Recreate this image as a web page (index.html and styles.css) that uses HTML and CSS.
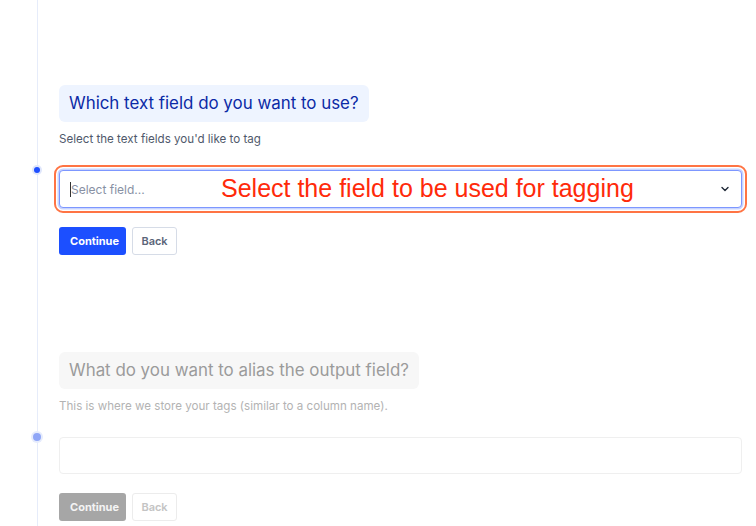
FILE: index.html
```html
<!DOCTYPE html>
<html lang="en">
<head>
<meta charset="utf-8">
<title>Tagging setup</title>
<link rel="stylesheet" href="styles.css">
</head>
<body>
<div class="page">
  <div class="timeline">
    <section class="step step-active">
      <div class="step-title">Which text field do you want to use?</div>
      <p class="step-desc">Select the text fields you'd like to tag</p>
      <div class="field-row">
        <span class="dot dot-active"></span>
        <div class="select annotated">
          <span class="caret"></span>
          <span class="placeholder">Select field...</span>
          <svg class="chevron" width="8" height="6" viewBox="0 0 8 6"><polyline points="1,1.5 4,4.5 7,1.5" fill="none" stroke="#1f2937" stroke-width="1.4" stroke-linecap="round" stroke-linejoin="round"/></svg>
          <span class="annotation">Select the field to be used for tagging</span>
        </div>
      </div>
      <div class="actions">
        <button class="btn btn-primary">Continue</button>
        <button class="btn btn-secondary">Back</button>
      </div>
    </section>

    <section class="step step-disabled">
      <div class="step-title">What do you want to alias the output field?</div>
      <p class="step-desc">This is where we store your tags (similar to a column name).</p>
      <div class="field-row">
        <span class="dot dot-pending"></span>
        <div class="input"></div>
      </div>
      <div class="actions">
        <button class="btn btn-primary">Continue</button>
        <button class="btn btn-secondary">Back</button>
      </div>
    </section>
  </div>
</div>
</body>
</html>
```

FILE: styles.css
```css
* { box-sizing: border-box; }

html, body {
  margin: 0;
  padding: 0;
  background: #ffffff;
  font-family: Inter, "Noto Sans", "Liberation Sans", sans-serif;
}

.page {
  padding-left: 37px;
  padding-right: 14px;
  height: 526px;
  overflow: hidden;
}

.timeline {
  border-left: 1px solid #e6ecfa;
  height: 100%;
  padding-left: 21px;
  padding-top: 85px;
}

.step {
  display: flex;
  flex-direction: column;
  align-items: flex-start;
}

.step + .step {
  margin-top: 97px;
}

.step-title {
  font-size: 16.9px;
  line-height: 21px;
  padding: 8px 10px 8px 10px;
  border-radius: 6px;
}

.step-active .step-title {
  background: #eef4ff;
  color: #0b2aa6;
}

.step-disabled .step-title {
  background: #f7f7f7;
  color: #9b9b9b;
}

.step-desc {
  margin: 10px 0 0 0;
  font-size: 11.6px;
  line-height: 15px;
}

.step-active .step-desc { color: #4f596b; }
.step-disabled .step-desc { color: #b3b3b3; }

.field-row {
  position: relative;
  align-self: stretch;
  margin-top: 23px;
}

.dot {
  position: absolute;
  border-radius: 50%;
}

.dot-active {
  width: 6px;
  height: 6px;
  left: -25px;
  top: -3px;
  background: #1f4fff;
  box-shadow: 0 0 0 2px #dfe6fb;
}

.dot-pending {
  width: 8px;
  height: 8px;
  left: -26px;
  top: -4px;
  background: #8fa6f7;
  box-shadow: 0 0 0 2px #e6ecfc;
}

.select {
  position: relative;
  display: flex;
  align-items: center;
  height: 38px;
  padding: 0 10px;
  border: 1.5px solid #7d97ff;
  border-radius: 4px;
  box-shadow: 0 0 0 1.5px #c8d4ff;
  background: #ffffff;
}

.annotated {
  outline: 2px solid #ff7444;
  outline-offset: 3px;
}

.caret {
  width: 1px;
  height: 15px;
  background: #333;
}

.placeholder {
  font-size: 12px;
  color: #8891a4;
}

.chevron {
  margin-left: auto;
  margin-right: 2px;
}

.annotation {
  position: absolute;
  left: 161px;
  top: 2px;
  font-family: "Liberation Sans", Arial, sans-serif;
  font-size: 25px;
  line-height: 30px;
  color: #ff2a0a;
  white-space: nowrap;
}

.input {
  height: 37px;
  border: 1px solid #efefef;
  border-radius: 4px;
}

.actions {
  display: flex;
  gap: 6px;
  margin-top: 19px;
}

.btn {
  font-family: Inter, "Noto Sans", "Liberation Sans", sans-serif;
  font-size: 11px;
  font-weight: 700;
  height: 28px;
  padding: 0 10px;
  border-radius: 3px;
  cursor: pointer;
}

.btn-primary {
  width: 67px;
  border: 1px solid transparent;
}

.btn-secondary {
  width: 45px;
  padding: 0;
  background: #ffffff;
  font-weight: 600;
}

.step-active .btn-primary {
  background: #1c4fff;
  color: #ffffff;
}

.step-active .btn-secondary {
  border: 1px solid #d6dce7;
  color: #5b6579;
}

.step-disabled .btn-primary {
  background: #a6a6a6;
  color: #f4f4f4;
}

.step-disabled .btn-secondary {
  border: 1px solid #ececec;
  color: #c4c4c4;
}
```
